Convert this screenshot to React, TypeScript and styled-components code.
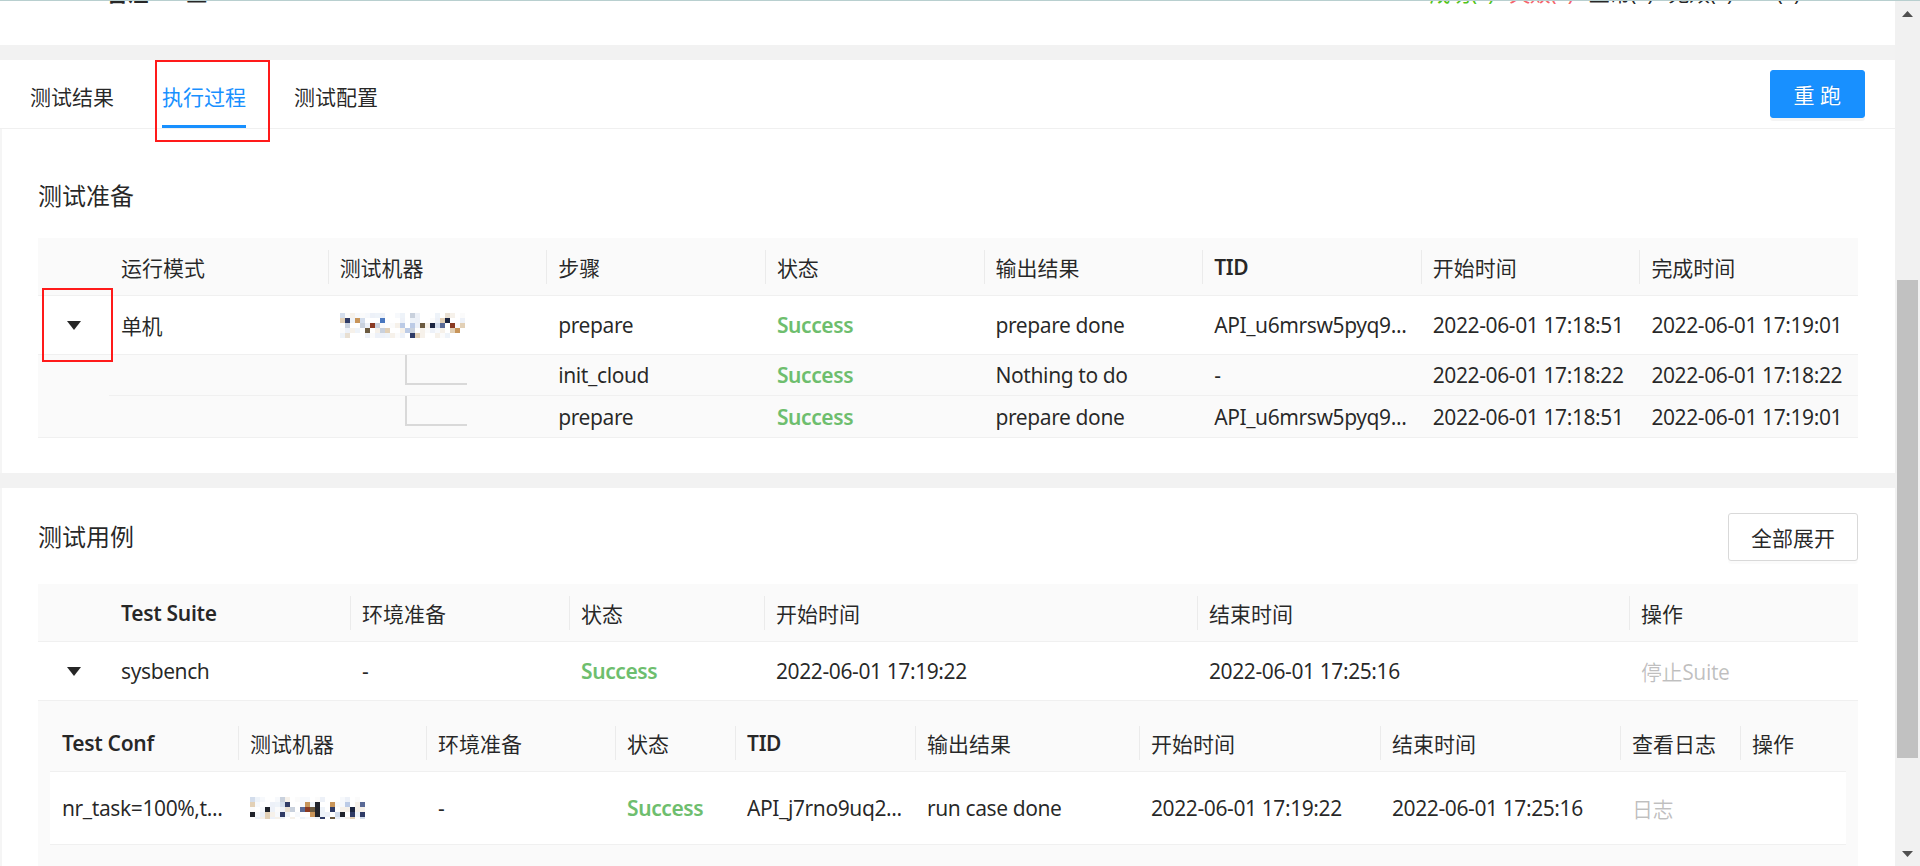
import React from "react";
import styled, { createGlobalStyle, css } from "styled-components";

const FONT = `"Noto Sans", "Noto Sans CJK SC", sans-serif`;

const GlobalStyle = createGlobalStyle`
  html, body { margin: 0; padding: 0; }
  body {
    background: #f2f2f2;
    font-family: ${FONT};
    font-size: 21px;
    color: rgba(0, 0, 0, 0.85);
    overflow: hidden;
  }
  * { box-sizing: border-box; }
`;

const Viewport = styled.div`
  position: relative;
  display: flex;
  width: 1920px;
  height: 866px;
  border-top: 1px solid #b8cfcf;
  overflow: hidden;
`;

const Page = styled.main`
  flex: 1;
  min-width: 0;
  display: flex;
  flex-direction: column;
  overflow: hidden;
`;

/* ---------- top strip (scrolled, only bottom visible) ---------- */
const TopStrip = styled.header`
  flex: none;
  height: 44px;
  background: #fff;
  overflow: hidden;
`;

const TopRow = styled.div`
  display: flex;
  align-items: baseline;
  margin-top: -24px;
  height: 33px;
  line-height: 33px;
  padding: 0 95px 0 107px;
  letter-spacing: -0.4px;
`;

const NoteLabel = styled.span`
  font-weight: 700;
`;

const NoteValue = styled.span`
  margin-left: 38px;
`;

const Counts = styled.div`
  margin-left: auto;
  display: flex;
  gap: 15px;
`;

const Count = styled.span<{ $tone?: "green" | "red" }>`
  color: ${(p) =>
    p.$tone === "green" ? "#52c41a" : p.$tone === "red" ? "#f5646c" : "rgba(0,0,0,0.85)"};
`;

/* ---------- tabs ---------- */
const TabsCard = styled.section`
  flex: none;
  margin-top: 15px;
  background: #fff;
`;

const TabBar = styled.div`
  display: flex;
  align-items: center;
  height: 69px;
  padding: 0 30px;
  border-bottom: 1px solid #f0f0f0;
`;

const TabList = styled.div`
  display: flex;
  gap: 48px;
  align-self: stretch;
`;

const Tab = styled.div<{ $active?: boolean }>`
  display: flex;
  align-items: center;
  padding-top: 3px;
  color: ${(p) => (p.$active ? "#1890ff" : "rgba(0,0,0,0.85)")};
  box-shadow: ${(p) => (p.$active ? "inset 0 -3px 0 #1890ff" : "none")};
`;

const PrimaryButton = styled.button`
  margin-left: auto;
  height: 48px;
  padding: 0 23px;
  border: 1px solid #1890ff;
  border-radius: 3px;
  background: #1890ff;
  color: #fff;
  font: 21px ${FONT};
  box-shadow: 0 3px 0 rgba(0, 0, 0, 0.045);
  text-shadow: 0 -1px 0 rgba(0, 0, 0, 0.12);
`;

const OutlineButton = styled.button`
  height: 48px;
  padding: 0 22px;
  border: 1px solid #d9d9d9;
  border-radius: 3px;
  background: #fff;
  color: rgba(0, 0, 0, 0.85);
  font: 21px ${FONT};
  box-shadow: 0 3px 0 rgba(0, 0, 0, 0.016);
`;

/* ---------- cards ---------- */
const Card = styled.section<{ $mt: number; $pt: number; $pb: number; $grow?: boolean }>`
  flex: ${(p) => (p.$grow ? "1" : "none")};
  margin-top: ${(p) => p.$mt}px;
  padding: ${(p) => p.$pt}px 37px ${(p) => p.$pb}px 38px;
  background: #fff;
  box-shadow: inset 2px 0 0 #f5f5f5;
  display: flex;
  flex-direction: column;
  min-height: 0;
`;

const CardTitle = styled.h2`
  margin: 0;
  font-size: 24px;
  line-height: 36px;
  font-weight: 400;
  color: rgba(0, 0, 0, 0.85);
`;

const CardHeader = styled.div`
  display: flex;
  align-items: center;
  justify-content: space-between;
  height: 48px;
`;

/* ---------- tables ---------- */
const Table = styled.div<{ $mt: number; $grow?: boolean }>`
  margin-top: ${(p) => p.$mt}px;
  display: flex;
  flex-direction: column;
  flex: ${(p) => (p.$grow ? "1" : "none")};
`;

const HeadRow = styled.div<{ $cols: string }>`
  display: grid;
  grid-template-columns: ${(p) => p.$cols};
  height: 58px;
  background: #fafafa;
  border-bottom: 1px solid #f0f0f0;
`;

const Th = styled.div<{ $sep?: boolean }>`
  position: relative;
  display: flex;
  align-items: center;
  padding: 0 12px;
  white-space: nowrap;
  overflow: hidden;
  ${(p) =>
    p.$sep &&
    css`
      &::before {
        content: "";
        position: absolute;
        left: 0;
        top: 50%;
        width: 1px;
        height: 34px;
        margin-top: -17px;
        background: rgba(0, 0, 0, 0.06);
      }
    `}
`;

const Strong = styled.span`
  font-weight: 600;
  letter-spacing: -0.3px;
`;

const BodyRow = styled.div<{ $cols: string; $h: number; $bg?: string }>`
  display: grid;
  grid-template-columns: ${(p) => p.$cols};
  height: ${(p) => p.$h}px;
  background: ${(p) => p.$bg ?? "#fff"};
  border-bottom: 1px solid #f0f0f0;
`;

type Tone = "success" | "muted" | undefined;

const Td = styled.div<{ $tone?: Tone }>`
  display: flex;
  align-items: center;
  padding: 0 12px;
  white-space: nowrap;
  overflow: hidden;
  letter-spacing: -0.4px;
  color: ${(p) =>
    p.$tone === "success" ? "#6ebe6e" : p.$tone === "muted" ? "rgba(0,0,0,0.25)" : "rgba(0,0,0,0.85)"};
  font-weight: ${(p) => (p.$tone === "success" ? 600 : 400)};
`;

const ExpandCell = styled.div`
  display: flex;
  align-items: center;
  justify-content: center;
`;

const SubArea = styled.div`
  display: grid;
  grid-template-columns: 71px 1fr;
  background: #fafafa;
  border-bottom: 1px solid #f0f0f0;
`;

const SubList = styled.div`
  display: flex;
  flex-direction: column;
`;

const SubRow = styled.div`
  display: grid;
  grid-template-columns: repeat(8, minmax(0, 1fr));
  height: 41px;
  &:not(:last-child) {
    border-bottom: 1px solid #f0f0f0;
  }
`;

const TreeCell = styled.div`
  padding: 0 12px;
  display: flex;
  align-items: flex-start;
`;

const TreeLink = styled.span`
  display: block;
  width: 62px;
  height: 30px;
  margin-left: 65px;
  border-left: 2px solid #d9d9d9;
  border-bottom: 2px solid #d9d9d9;
`;

const NestedArea = styled.div`
  flex: 1;
  background: #fafafa;
  padding: 13px 12px 0;
`;

/* ---------- scrollbar ---------- */
const ScrollBar = styled.div`
  flex: none;
  width: 25px;
  background: #f1f1f1;
  display: flex;
  flex-direction: column;
`;

const ScrollArrow = styled.div`
  flex: none;
  height: 25px;
  display: flex;
  align-items: center;
  justify-content: center;
`;

const ScrollTrack = styled.div`
  flex: 1;
  padding: 0 2px;
`;

const ScrollThumb = styled.div`
  margin-top: 254px;
  height: 478px;
  background: #c1c1c1;
`;

/* ---------- annotation boxes (overlay) ---------- */
const Annotation = styled.div<{ $x: number; $y: number; $w: number; $h: number }>`
  position: absolute;
  left: ${(p) => p.$x}px;
  top: ${(p) => p.$y}px;
  width: ${(p) => p.$w}px;
  height: ${(p) => p.$h}px;
  border: 2px solid #ff1a1a;
  pointer-events: none;
`;

/* ---------- drawings ---------- */
const Caret = () => (
  <svg width="14" height="9" viewBox="0 0 14 9">
    <polygon points="0,0 14,0 7,9" fill="rgba(0,0,0,0.85)" />
  </svg>
);

const Tri = ({ up }: { up?: boolean }) => (
  <svg width="11" height="6" viewBox="0 0 11 6">
    <polygon points={up ? "0,6 11,6 5.5,0" : "0,0 11,0 5.5,6"} fill="#505050" />
  </svg>
);

function mulberry32(a: number) {
  return function () {
    a |= 0;
    a = (a + 0x6d2b79f5) | 0;
    let t = Math.imul(a ^ (a >>> 15), 1 | a);
    t = (t + Math.imul(t ^ (t >>> 7), 61 | t)) ^ t;
    return ((t ^ (t >>> 14)) >>> 0) / 4294967296;
  };
}

const LIGHT = ["#ffffff", "#f7f9fc", "#eef3f9", "#f6f1ea", "#edf1f8", "#fbfbfb", "#ffffff", "#ffffff"];
const MID = ["#d3ddec", "#e2d0b6", "#bccbe6", "#e8dfd2", "#c9d1dd"];
const DARK = ["#1b2440", "#2f3b66", "#6b5a40", "#8a3a22", "#4a78c0", "#c8955a", "#20232b", "#5a6a96"];

const Mosaic = ({ w, h, seed }: { w: number; h: number; seed: number }) => {
  const cell = 5;
  const cols = Math.ceil(w / cell);
  const rows = Math.ceil(h / cell);
  const rnd = mulberry32(seed);
  const rects: React.ReactNode[] = [];
  for (let r = 0; r < rows; r++) {
    for (let c = 0; c < cols; c++) {
      const v = rnd();
      const inner = r > 0 && r < rows - 1;
      const gapCol = c % 5 === 4;
      let color: string;
      if (inner && !gapCol && v < 0.2) color = DARK[Math.floor(rnd() * DARK.length)];
      else if (v < (inner ? 0.4 : 0.12)) color = MID[Math.floor(rnd() * MID.length)];
      else if (r === rows - 1 && v > 0.95) color = DARK[Math.floor(rnd() * DARK.length)];
      else color = LIGHT[Math.floor(rnd() * LIGHT.length)];
      rects.push(<rect key={`${r}-${c}`} x={c * cell} y={r * cell} width={cell} height={cell} fill={color} />);
    }
  }
  return (
    <svg width={w} height={h} viewBox={`0 0 ${w} ${h}`}>
      {rects}
    </svg>
  );
};

/* ---------- data ---------- */
const COLS1 = "71px repeat(8, minmax(0, 1fr))";
const COLS2 = "71px 241px 219px 195px 433px 432px 229px";
const COLS3 = "188px 188px 189px 120px 180px 224px 241px 240px 120px 106px";

const HEAD1: React.ReactNode[] = ["运行模式", "测试机器", "步骤", "状态", "输出结果", <Strong>TID</Strong>, "开始时间", "完成时间"];
const HEAD2: React.ReactNode[] = [<Strong>Test Suite</Strong>, "环境准备", "状态", "开始时间", "结束时间", "操作"];
const HEAD3: React.ReactNode[] = [
  <Strong>Test Conf</Strong>,
  "测试机器",
  "环境准备",
  "状态",
  <Strong>TID</Strong>,
  "输出结果",
  "开始时间",
  "结束时间",
  "查看日志",
  "操作",
];

type Sub = { step: string; out: string; tid: string; start: string; end: string };
const SUBS: Sub[] = [
  { step: "init_cloud", out: "Nothing to do", tid: "-", start: "2022-06-01 17:18:22", end: "2022-06-01 17:18:22" },
  { step: "prepare", out: "prepare done", tid: "API_u6mrsw5pyq9...", start: "2022-06-01 17:18:51", end: "2022-06-01 17:19:01" },
];

export default function App() {
  return (
    <>
      <GlobalStyle />
      <Viewport>
        <Page>
          <TopStrip>
            <TopRow>
              <NoteLabel>备注</NoteLabel>
              <NoteValue>正</NoteValue>
              <Counts>
                <Count $tone="green">成功(0)</Count>
                <Count $tone="red">失败(0)</Count>
                <Count>正常(0)</Count>
                <Count>无效(0)</Count>
                <Count>NA(1)</Count>
              </Counts>
            </TopRow>
          </TopStrip>

          <TabsCard>
            <TabBar>
              <TabList>
                <Tab>测试结果</Tab>
                <Tab $active>执行过程</Tab>
                <Tab>测试配置</Tab>
              </TabList>
              <PrimaryButton>重 跑</PrimaryButton>
            </TabBar>
          </TabsCard>

          <Card $mt={0} $pt={49} $pb={35}>
            <CardTitle>测试准备</CardTitle>
            <Table $mt={24}>
              <HeadRow $cols={COLS1}>
                <Th />
                {HEAD1.map((h, i) => (
                  <Th key={i} $sep={i > 0}>
                    {h}
                  </Th>
                ))}
              </HeadRow>
              <BodyRow $cols={COLS1} $h={59}>
                <ExpandCell>
                  <Caret />
                </ExpandCell>
                <Td>单机</Td>
                <Td>
                  <Mosaic w={125} h={25} seed={7} />
                </Td>
                <Td>prepare</Td>
                <Td $tone="success">Success</Td>
                <Td>prepare done</Td>
                <Td>API_u6mrsw5pyq9...</Td>
                <Td>2022-06-01 17:18:51</Td>
                <Td>2022-06-01 17:19:01</Td>
              </BodyRow>
              <SubArea>
                <div />
                <SubList>
                  {SUBS.map((s, i) => (
                    <SubRow key={i}>
                      <Td />
                      <TreeCell>
                        <TreeLink />
                      </TreeCell>
                      <Td>{s.step}</Td>
                      <Td $tone="success">Success</Td>
                      <Td>{s.out}</Td>
                      <Td>{s.tid}</Td>
                      <Td>{s.start}</Td>
                      <Td>{s.end}</Td>
                    </SubRow>
                  ))}
                </SubList>
              </SubArea>
            </Table>
          </Card>

          <Card $mt={15} $pt={25} $pb={0} $grow>
            <CardHeader>
              <CardTitle>测试用例</CardTitle>
              <OutlineButton>全部展开</OutlineButton>
            </CardHeader>
            <Table $mt={23} $grow>
              <HeadRow $cols={COLS2}>
                <Th />
                {HEAD2.map((h, i) => (
                  <Th key={i} $sep={i > 0}>
                    {h}
                  </Th>
                ))}
              </HeadRow>
              <BodyRow $cols={COLS2} $h={59}>
                <ExpandCell>
                  <Caret />
                </ExpandCell>
                <Td>sysbench</Td>
                <Td>-</Td>
                <Td $tone="success">Success</Td>
                <Td>2022-06-01 17:19:22</Td>
                <Td>2022-06-01 17:25:16</Td>
                <Td $tone="muted">停止Suite</Td>
              </BodyRow>
              <NestedArea>
                <HeadRow $cols={COLS3}>
                  {HEAD3.map((h, i) => (
                    <Th key={i} $sep={i > 0}>
                      {h}
                    </Th>
                  ))}
                </HeadRow>
                <BodyRow $cols={COLS3} $h={73}>
                  <Td>nr_task=100%,t...</Td>
                  <Td>
                    <Mosaic w={115} h={22} seed={23} />
                  </Td>
                  <Td>-</Td>
                  <Td $tone="success">Success</Td>
                  <Td>API_j7rno9uq2...</Td>
                  <Td>run case done</Td>
                  <Td>2022-06-01 17:19:22</Td>
                  <Td>2022-06-01 17:25:16</Td>
                  <Td $tone="muted">日志</Td>
                  <Td />
                </BodyRow>
              </NestedArea>
            </Table>
          </Card>
        </Page>

        <ScrollBar>
          <ScrollArrow>
            <Tri up />
          </ScrollArrow>
          <ScrollTrack>
            <ScrollThumb />
          </ScrollTrack>
          <ScrollArrow>
            <Tri />
          </ScrollArrow>
        </ScrollBar>

        <Annotation $x={155} $y={59} $w={115} $h={82} />
        <Annotation $x={42} $y={287} $w={71} $h={74} />
      </Viewport>
    </>
  );
}
